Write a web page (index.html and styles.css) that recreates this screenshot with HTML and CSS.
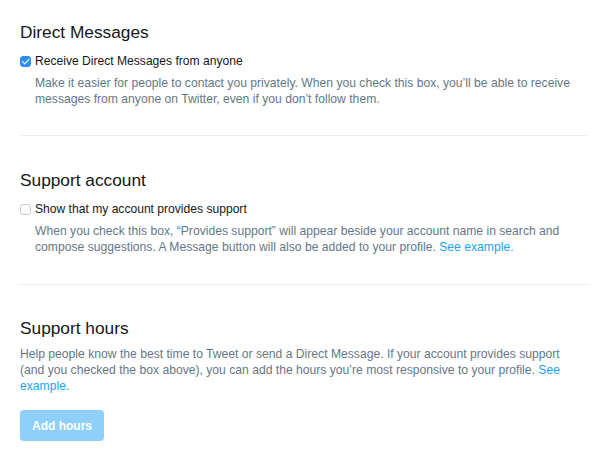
FILE: index.html
```html
<!DOCTYPE html>
<html lang="en">
<head>
    <meta charset="UTF-8">
    <meta name="viewport" content="width=device-width, initial-scale=1.0">
    <title>Settings - Safety</title>
    <link rel="stylesheet" href="styles.css">
</head>
<body>

    <div class="settings">

        <!-- Direct Messages -->
        <div class="section first">
            <h3>Direct Messages</h3>
            <label class="check-row">
                <input type="checkbox" checked>
                <span>Receive Direct Messages from anyone</span>
            </label>
            <p class="hint indented">Make it easier for people to contact you privately. When you check this box, you’ll be able to receive messages from anyone on Twitter, even if you don’t follow them.</p>
        </div>

        <!-- Support account -->
        <div class="section">
            <h3>Support account</h3>
            <label class="check-row">
                <input type="checkbox">
                <span>Show that my account provides support</span>
            </label>
            <p class="hint indented">When you check this box, “Provides support” will appear beside your account name in search and compose suggestions. A Message button will also be added to your profile. <a href="#">See example.</a></p>
        </div>

        <!-- Support hours -->
        <div class="section last">
            <h3>Support hours</h3>
            <p class="hint">Help people know the best time to Tweet or send a Direct Message. If your account provides support (and you checked the box above), you can add the hours you’re most responsive to your profile. <a href="#">See example.</a></p>
            <button class="btn" disabled>Add hours</button>
        </div>

    </div>

</body>
</html>
```

FILE: styles.css
```css
body { margin: 0; background: #fff; font-family: "Liberation Sans", Arial, sans-serif; color: #14171a; }
.settings { padding: 0 12px 0 20px; }

.section { padding: 33px 0 29px; border-bottom: 1px solid #e6ecf0; }
.section.first { padding-top: 21px; padding-bottom: 28px; }
.section.last { border-bottom: none; padding-top: 32px; padding-bottom: 16px; }

h3 { margin: 0 0 10px; font-size: 17.3px; font-weight: normal; line-height: 22px; }
.section.last h3 { margin-bottom: 7px; }

.check-row { display: flex; align-items: center; gap: 4px; font-size: 12.1px; line-height: 16px; margin-bottom: 6px; }
.check-row input {
    -webkit-appearance: none; appearance: none; margin: 0;
    width: 11px; height: 11px; border: 1px solid #c4c9cd; border-radius: 3px;
    background: #fff; position: relative; flex-shrink: 0;
}
.check-row input:checked { background: #2f8ef4; border-color: #2f8ef4; }
.check-row input:checked::after {
    content: ""; position: absolute; left: 3px; top: 0.5px;
    width: 2.5px; height: 5.5px; border: solid #fff; border-width: 0 1.5px 1.5px 0;
    transform: rotate(45deg);
}

.hint { margin: 0; padding-right: 12px; font-size: 12.15px; line-height: 16px; color: #657786; }
.hint.indented { padding-left: 15px; }
.hint a { color: #1da1f2; text-decoration: none; }

.btn {
    display: block; margin-top: 16px; padding: 0 12px; height: 31px;
    background: #8ed0f9; color: #fff; border: none; border-radius: 4px;
    font-family: inherit; font-size: 12px; font-weight: bold;
}
```
